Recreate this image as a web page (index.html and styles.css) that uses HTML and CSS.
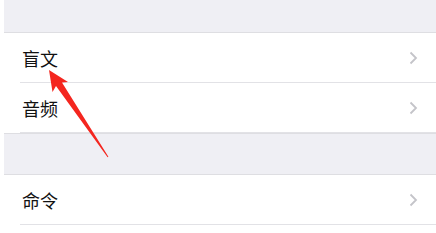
FILE: index.html
```html
<!DOCTYPE html>
<html lang="zh-CN">
<head>
    <meta charset="UTF-8">
    <meta name="viewport" content="width=device-width, initial-scale=1.0">
    <title>辅助功能</title>
    <link rel="stylesheet" href="styles.css">
</head>
<body>
    <div class="screen">
        <div class="spacer top"></div>

        <div class="group">
            <div class="row">
                <span class="label">盲文</span>
                <svg class="chevron" width="9" height="14" viewBox="0 0 9 14"><polyline points="1.5,1.5 7,7 1.5,12.5"/></svg>
            </div>
            <div class="row">
                <span class="label">音频</span>
                <svg class="chevron" width="9" height="14" viewBox="0 0 9 14"><polyline points="1.5,1.5 7,7 1.5,12.5"/></svg>
            </div>
        </div>

        <div class="spacer"></div>

        <div class="group">
            <div class="row">
                <span class="label">命令</span>
                <svg class="chevron" width="9" height="14" viewBox="0 0 9 14"><polyline points="1.5,1.5 7,7 1.5,12.5"/></svg>
            </div>
        </div>

        <!-- 红色指示箭头 -->
        <svg class="pointer" width="436" height="233" viewBox="0 0 436 233">
            <polygon points="49,70 68,82 62,82.5 108.4,156.7 107.6,157.3 56,86 52.5,92"/>
        </svg>
    </div>
</body>
</html>
```

FILE: styles.css
```css
/* 设置列表页面 */
body {
    margin: 0;
    background-color: #ffffff;
    font-family: "Noto Sans CJK SC", "Noto Sans", sans-serif;
}

.screen {
    position: relative;
    width: 432px;
    height: 233px;
    margin-left: 4px;
    overflow: hidden;
}

.spacer {
    height: 40px;
    background-color: #efeff4;
    border-bottom: 1px solid #dedee2;
}

.spacer.top {
    height: 32px;
}

.group {
    background-color: #ffffff;
}

.group + .spacer {
    border-top: 1px solid #dedee2;
}

.row {
    height: 49px;
    margin-left: 16px;
    padding-right: 18px;
    display: flex;
    align-items: center;
    justify-content: space-between;
    border-bottom: 1px solid #e2e2e6;
}

.group:first-of-type .row:last-child {
    border-bottom: none;
}

.label {
    font-size: 18px;
    color: #111111;
    padding-left: 2px;
}

.chevron polyline {
    fill: none;
    stroke: #c4c4c9;
    stroke-width: 1.8;
}

.pointer {
    position: absolute;
    left: -4px;
    top: 0;
}

.pointer polygon {
    fill: #f4261f;
}
```
